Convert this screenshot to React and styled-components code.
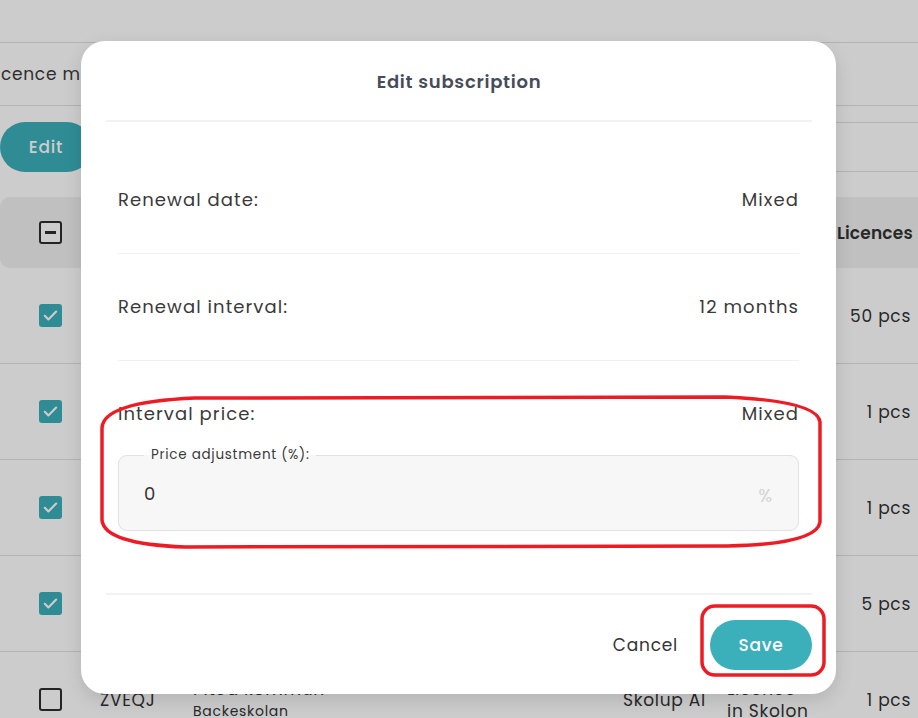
import React from "react";
import styled, { createGlobalStyle } from "styled-components";

const Global = createGlobalStyle`
  html, body { margin: 0; padding: 0; }
  body {
    width: 918px; height: 718px; overflow: hidden; background: #fff;
    font-family: "Poppins", "Open Sans", "Noto Sans", sans-serif;
    letter-spacing: 0.045em;
    color: #333;
  }
  button { letter-spacing: 0.045em; }
  * { box-sizing: border-box; }
`;

const FONT = `"Poppins", "Open Sans", "Noto Sans", sans-serif`;

const Page = styled.div`
  position: relative;
  width: 918px;
  height: 718px;
  overflow: hidden;
  background: #fff;
`;

const TopBar = styled.div`
  height: 43px;
  border-bottom: 1px solid #e0e0e0;
`;

const Tabs = styled.div`
  height: 63px;
  border-bottom: 1px solid #e0e0e0;
  display: flex;
  align-items: center;
  margin-left: -12px;
  font-size: 17px;
  color: #3a3a3a;
`;

const Toolbar = styled.div`
  height: 91px;
  display: flex;
  align-items: flex-start;
  justify-content: space-between;
  padding-top: 16px;
`;

const EditButton = styled.button`
  height: 50px;
  width: 92px;
  border: none;
  border-radius: 25px;
  background: #3bb0bb;
  color: #fff;
  font: 500 17px ${FONT};
`;

const SearchBox = styled.div`
  width: 320px;
  height: 50px;
  border-top: 1px solid #e0e0e0;
  border-bottom: 1px solid #e0e0e0;
`;

const Grid = styled.div`
  display: grid;
  grid-template-columns: 100px 93px 430px 104px 110px 1fr;
  align-items: center;
  padding-right: 8px;
`;

const HeaderRow = styled(Grid)`
  height: 71px;
  background: #f0f0f0;
  border-radius: 10px 0 0 10px;
  font-weight: 600;
  font-size: 17px;
  letter-spacing: 0.01em;
  color: #333;
`;

const Row = styled(Grid)`
  height: 96px;
  border-bottom: 1px solid #e0e0e0;
  font-size: 17px;
  color: #333;
`;

const CheckCell = styled.div`
  display: flex;
  justify-content: center;
`;

const Box = styled.span`
  width: 23px;
  height: 23px;
  border-radius: 3px;
  display: flex;
  align-items: center;
  justify-content: center;
  background: ${(p) => (p.$checked ? "#3bb0bb" : "#fff")};
  border: ${(p) => (p.$checked ? "none" : "2.5px solid #2e2e2e")};
`;

const Dash = styled.span`
  width: 11px;
  height: 2.5px;
  background: #2e2e2e;
`;

const Stack = styled.div`
  display: flex;
  flex-direction: column;
  line-height: 22px;
`;

const Small = styled.span`
  font-size: 14px;
`;

const RightCell = styled.div`
  text-align: right;
  white-space: nowrap;
  margin-right: -1px;
`;

const Overlay = styled.div`
  position: absolute;
  inset: 0;
  background: rgba(0, 0, 0, 0.2);
`;

const Modal = styled.div`
  position: absolute;
  left: 81px;
  top: 41px;
  width: 755px;
  height: 653px;
  background: #fff;
  border-radius: 24px;
  box-shadow: 0 6px 18px rgba(0, 0, 0, 0.12);
  display: flex;
  flex-direction: column;
  font-family: ${FONT};
`;

const ModalHeader = styled.div`
  height: 81px;
  margin: 0 24px 0 25px;
  border-bottom: 2px solid #f2f2f2;
  display: flex;
  align-items: center;
  justify-content: center;
  padding-top: 2px;
  font-size: 18px;
  font-weight: 600;
  color: #474b5a;
`;

const ModalBody = styled.div`
  flex: 1;
  padding: 25px 37px 0;
`;

const InfoRow = styled.div`
  display: flex;
  justify-content: space-between;
  align-items: center;
  padding: ${(p) => (p.$last ? "0" : "41px 0")};
  line-height: 24px;
  font-size: 18px;
  letter-spacing: 0.06em;
  color: #3a3a3a;
  border-bottom: ${(p) => (p.$last ? "none" : "1px solid #f0f0f0")};
`;

const PriceSection = styled.div`
  padding-top: 41px;
`;

const Field = styled.fieldset`
  margin: 19px 0 0;
  padding: 0 25px 0 25px;
  height: 86px;
  border: 1px solid #e1e1e1;
  border-radius: 9px;
  background: #f7f7f7;
  display: flex;
  align-items: center;
  justify-content: space-between;
`;

const Legend = styled.legend`
  padding: 0 7px;
  font-size: 13.5px;
  color: #3a3a3a;
  background: linear-gradient(to bottom, #fff 50%, #f7f7f7 50%);
`;

const Value = styled.span`
  font-size: 18px;
  color: #333;
  margin-top: -8px;
`;

const Unit = styled.span`
  font-size: 18px;
  color: #d3d3d3;
  margin-top: -4px;
`;

const Footer = styled.div`
  height: 101px;
  margin: 0 24px 0 25px;
  border-top: 2px solid #f2f2f2;
  display: flex;
  align-items: center;
  justify-content: flex-end;
  gap: 32px;
`;

const CancelButton = styled.button`
  border: none;
  background: none;
  padding: 0;
  font: 400 17px ${FONT};
  color: #333;
`;

const SaveButton = styled.button`
  width: 102px;
  height: 50px;
  border: none;
  border-radius: 25px;
  background: #3bb0bb;
  color: #fff;
  font: 500 17px ${FONT};
`;

const Annotations = styled.svg`
  position: absolute;
  left: 0;
  top: 0;
  pointer-events: none;
`;

const Check = () => (
  <svg width="17" height="17" viewBox="0 0 24 24" fill="none">
    <path d="M4 12.5l5 5L20 6.5" stroke="#fff" strokeWidth="3" strokeLinecap="round" strokeLinejoin="round" />
  </svg>
);

const rows = [
  { checked: true, code: "KQ7WP", name: "Piteå kommun", school: "Backeskolan", product: "Skolup AI", pcs: "50 pcs" },
  { checked: true, code: "BN3RT", name: "Piteå kommun", school: "Backeskolan", product: "Skolup AI", pcs: "1 pcs" },
  { checked: true, code: "HM2LX", name: "Piteå kommun", school: "Backeskolan", product: "Skolup AI", pcs: "1 pcs" },
  { checked: true, code: "TR8DA", name: "Piteå kommun", school: "Backeskolan", product: "Skolup AI", pcs: "5 pcs" },
  { checked: false, code: "ZVEQJ", name: "Piteå kommun", school: "Backeskolan", product: "Skolup AI", pcs: "1 pcs" },
];

export default function App() {
  return (
    <Page>
      <Global />
      <TopBar />
      <Tabs>Licence management</Tabs>
      <Toolbar>
        <EditButton>Edit</EditButton>
        <SearchBox />
      </Toolbar>
      <HeaderRow>
        <CheckCell>
          <Box>
            <Dash />
          </Box>
        </CheckCell>
        <div>Code</div>
        <div>Customer</div>
        <div>Product</div>
        <div>Status</div>
        <RightCell>Licences</RightCell>
      </HeaderRow>
      {rows.map((r) => (
        <Row key={r.code}>
          <CheckCell>
            <Box $checked={r.checked}>{r.checked && <Check />}</Box>
          </CheckCell>
          <div>{r.code}</div>
          <Stack>
            <span>{r.name}</span>
            <Small>{r.school}</Small>
          </Stack>
          <div>{r.product}</div>
          <Stack>
            <span>Licence</span>
            <span>in Skolon</span>
          </Stack>
          <RightCell>{r.pcs}</RightCell>
        </Row>
      ))}
      <Overlay />
      <Modal>
        <ModalHeader>Edit subscription</ModalHeader>
        <ModalBody>
          <InfoRow>
            <span>Renewal date:</span>
            <span>Mixed</span>
          </InfoRow>
          <InfoRow>
            <span>Renewal interval:</span>
            <span>12 months</span>
          </InfoRow>
          <PriceSection>
            <InfoRow $last>
              <span>Interval price:</span>
              <span>Mixed</span>
            </InfoRow>
            <Field>
              <Legend>Price adjustment (%):</Legend>
              <Value>0</Value>
              <Unit>%</Unit>
            </Field>
          </PriceSection>
        </ModalBody>
        <Footer>
          <CancelButton>Cancel</CancelButton>
          <SaveButton>Save</SaveButton>
        </Footer>
      </Modal>
      <Annotations width="918" height="718" viewBox="0 0 918 718">
        <path
          d="M102 428 Q103 402 195 398 L725 397 Q818 401 820 422 L820 522 Q817 544 728 546 L185 547 Q104 544 102 520 Z"
          fill="none"
          stroke="#ed1c24"
          strokeWidth="3.5"
        />
        <rect x="702" y="606" width="122" height="69" rx="13" fill="none" stroke="#ed1c24" strokeWidth="3.5" />
      </Annotations>
    </Page>
  );
}
